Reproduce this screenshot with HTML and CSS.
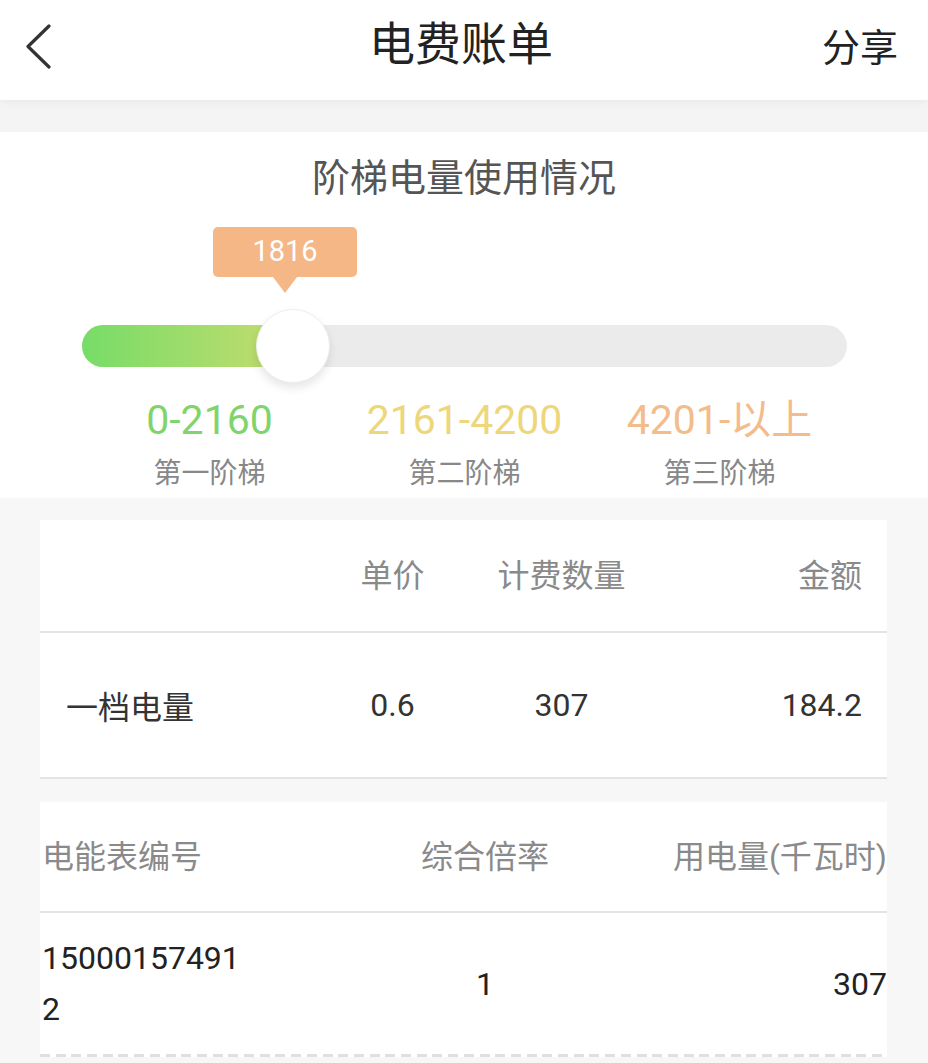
FILE: index.html
```html
<!DOCTYPE html>
<html lang="zh-CN">
<head>
    <meta charset="UTF-8">
    <title>电费账单</title>
    <link rel="stylesheet" href="styles.css">
</head>
<body>
    <header class="topbar">
        <span class="back">
            <svg width="30" height="46" viewBox="0 0 30 46">
                <polyline points="25,3 4,23.5 25,44" fill="none" stroke="#333" stroke-width="3.2" stroke-linecap="round" stroke-linejoin="round"/>
            </svg>
        </span>
        <h1 class="title">电费账单</h1>
        <span class="share">分享</span>
    </header>

    <div class="band"></div>

    <section class="usage">
        <h2 class="usage-title">阶梯电量使用情况</h2>
        <div class="slider">
            <div class="bubble">1816</div>
            <div class="track">
                <div class="fill" style="width: 27.5%"></div>
            </div>
            <div class="thumb"></div>
        </div>
        <div class="tiers">
            <div class="tier">
                <div class="range green">0-2160</div>
                <div class="name">第一阶梯</div>
            </div>
            <div class="tier">
                <div class="range yellow">2161-4200</div>
                <div class="name">第二阶梯</div>
            </div>
            <div class="tier">
                <div class="range orange">4201-以上</div>
                <div class="name">第三阶梯</div>
            </div>
        </div>
    </section>

    <!-- 阶梯费用 -->
    <div class="card fee">
        <div class="row head">
            <span></span>
            <span class="c">单价</span>
            <span class="c">计费数量</span>
            <span class="r">金额</span>
        </div>
        <div class="row body">
            <span>一档电量</span>
            <span class="c">0.6</span>
            <span class="c">307</span>
            <span class="r">184.2</span>
        </div>
    </div>

    <!-- 电能表 -->
    <div class="card meter">
        <div class="row head">
            <span>电能表编号</span>
            <span class="c mid">综合倍率</span>
            <span class="r">用电量(千瓦时)</span>
        </div>
        <div class="row body">
            <span class="num">150001574912</span>
            <span class="c mid">1</span>
            <span class="r">307</span>
        </div>
        <div class="dash"></div>
    </div>
</body>
</html>
```

FILE: styles.css
```css
body {
    margin: 0;
    background: #f7f7f7;
    font-family: Roboto, "Noto Sans CJK SC", sans-serif;
    color: #333;
}
.topbar {
    height: 88px;
    padding: 0 30px 12px 24px;
    background: #fff;
    display: grid;
    grid-template-columns: 1fr auto 1fr;
    align-items: center;
    box-shadow: 0 3px 8px rgba(0, 0, 0, 0.04);
    position: relative;
}
.back {
    display: flex;
    margin-top: 4px;
}
.title {
    margin: 0;
    font-size: 46px;
    font-weight: normal;
    color: #222;
    line-height: 60px;
}
.share {
    justify-self: end;
    font-size: 38px;
    color: #222;
}
.band {
    height: 32px;
    background: #f4f4f4;
}
.usage {
    background: #fff;
    padding: 23px 0 6px;
}
.usage-title {
    margin: 0;
    text-align: center;
    font-size: 38px;
    font-weight: normal;
    line-height: 46px;
    color: #555;
}
.slider {
    position: relative;
    margin: 26px 81px 0 82px;
    padding-top: 98px;
}
.track {
    height: 42px;
    border-radius: 21px;
    background: #ebebeb;
    overflow: hidden;
}
.fill {
    height: 100%;
    background: linear-gradient(90deg, #77dc69, #c6dc6e);
}
.bubble {
    position: absolute;
    top: 0;
    left: 131px;
    width: 144px;
    height: 50px;
    border-radius: 5px;
    background: #f4b785;
    color: #fff;
    font-size: 29px;
    line-height: 48px;
    text-align: center;
}
.bubble::after {
    content: "";
    position: absolute;
    left: 60px;
    bottom: -16px;
    border-left: 12px solid transparent;
    border-right: 12px solid transparent;
    border-top: 16px solid #f4b785;
}
.thumb {
    position: absolute;
    top: 82px;
    left: 174px;
    width: 72px;
    height: 72px;
    border-radius: 50%;
    background: #fff;
    border: 1px solid #eee;
    box-shadow: 0 5px 10px rgba(0, 0, 0, 0.1);
}
.tiers {
    margin: 29px 81px 0 82px;
    display: grid;
    grid-template-columns: repeat(3, 1fr);
    text-align: center;
}
.range {
    font-size: 41px;
    line-height: 48px;
}
.green { color: #7fd46c; }
.yellow { color: #eed67b; }
.orange { color: #f4bb8b; }
.name {
    margin-top: 12px;
    font-size: 28px;
    line-height: 36px;
    color: #888;
}
.card {
    margin: 22px 41px 0 40px;
    background: #fff;
}
.card.meter {
    margin-top: 23px;
}
.row {
    display: grid;
    align-items: center;
    font-size: 32px;
    border-bottom: 2px solid #e4e4e4;
}
.row.head {
    color: #8a8a8a;
    padding-bottom: 6px;
}
.fee .row {
    padding-left: 26px;
    padding-right: 25px;
    grid-template-columns: 242px 169px 169px 1fr;
}
.fee .head { height: 105px; }
.fee .body { height: 144px; }
.meter .row {
    padding-left: 2px;
    grid-template-columns: 205px 1fr 219px;
}
.meter .head { height: 103px; }
.meter .body {
    height: 141px;
    border-bottom: none;
    color: #222;
}
.meter .mid {
    padding-left: 55px;
}
.c { text-align: center; }
.r {
    text-align: right;
    white-space: nowrap;
}
.num {
    word-break: break-all;
    line-height: 51px;
}
.dash {
    height: 3px;
    background: repeating-linear-gradient(90deg, #dde2e1 0 10px, transparent 10px 15.7px);
}
```
